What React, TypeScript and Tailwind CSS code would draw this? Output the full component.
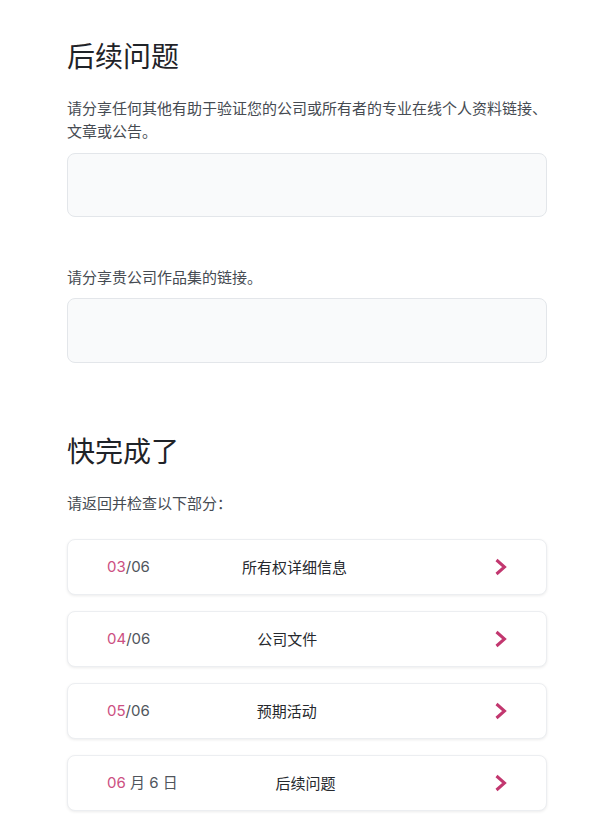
import React from "react";

const cjk = '"Noto Sans CJK SC", "Noto Sans", sans-serif';
const latin = 'Inter, "Noto Sans CJK SC", sans-serif';

function Chevron() {
  return (
    <svg width="14" height="18" viewBox="0 0 14 18" fill="none" className="ml-[-37px] shrink-0">
      <polyline points="2.5,2 10.5,9 2.5,16" stroke="#c2376f" strokeWidth="3" strokeLinejoin="miter" />
    </svg>
  );
}

type Item = { cur: string; rest: string; title: string };

const items: Item[] = [
  { cur: "03", rest: "/06", title: "所有权详细信息" },
  { cur: "04", rest: "/06", title: "公司文件" },
  { cur: "05", rest: "/06", title: "预期活动" },
  { cur: "06", rest: " 月 6 日", title: "后续问题" },
];

export default function App() {
  return (
    <div className="min-h-screen bg-white" style={{ fontFamily: cjk }}>
      <div className="ml-[67px] w-[480px] pt-[38px] pb-6">
        <h1 className="text-[28px] leading-[34px] font-normal text-[#1f2328]">后续问题</h1>
        <p className="mt-[25px] text-[15px] leading-[22.5px] text-[#464b52] w-[482px]">
          请分享任何其他有助于验证您的公司或所有者的专业在线个人资料链接、文章或公告。
        </p>
        <div className="mt-[11px] h-[64px] rounded-lg border border-[#e3e6ea] bg-[#f9fafb]" />

        <p className="mt-[49px] text-[15px] leading-[22.5px] text-[#464b52]">请分享贵公司作品集的链接。</p>
        <div className="mt-[9px] h-[65px] rounded-lg border border-[#e3e6ea] bg-[#f9fafb]" />

        <h1 className="mt-[70px] text-[28px] leading-[34px] font-normal text-[#1f2328]">快完成了</h1>
        <p className="mt-[25px] text-[15px] leading-[22.5px] text-[#464b52]">请返回并检查以下部分：</p>

        <div className="mt-[25px] flex flex-col gap-4">
          {items.map((it) => (
            <div
              key={it.cur}
              className="flex h-[56px] items-center rounded-lg border border-[#eceef1] bg-white pl-[39px] pr-[38px] shadow-[0_1px_3px_rgba(0,0,0,0.08)]"
            >
              <span className="text-[15px] whitespace-pre" style={{ fontFamily: latin }}>
                <span className="text-[#cc4f82]">{it.cur}</span>
                <span className="text-[#50555c]">{it.rest}</span>
              </span>
              <span className="flex-1" />
              <span className="text-[15px] text-[#26292e]">{it.title}</span>
              <span className="flex-[2]" />
              <Chevron />
            </div>
          ))}
        </div>
      </div>
    </div>
  );
}
